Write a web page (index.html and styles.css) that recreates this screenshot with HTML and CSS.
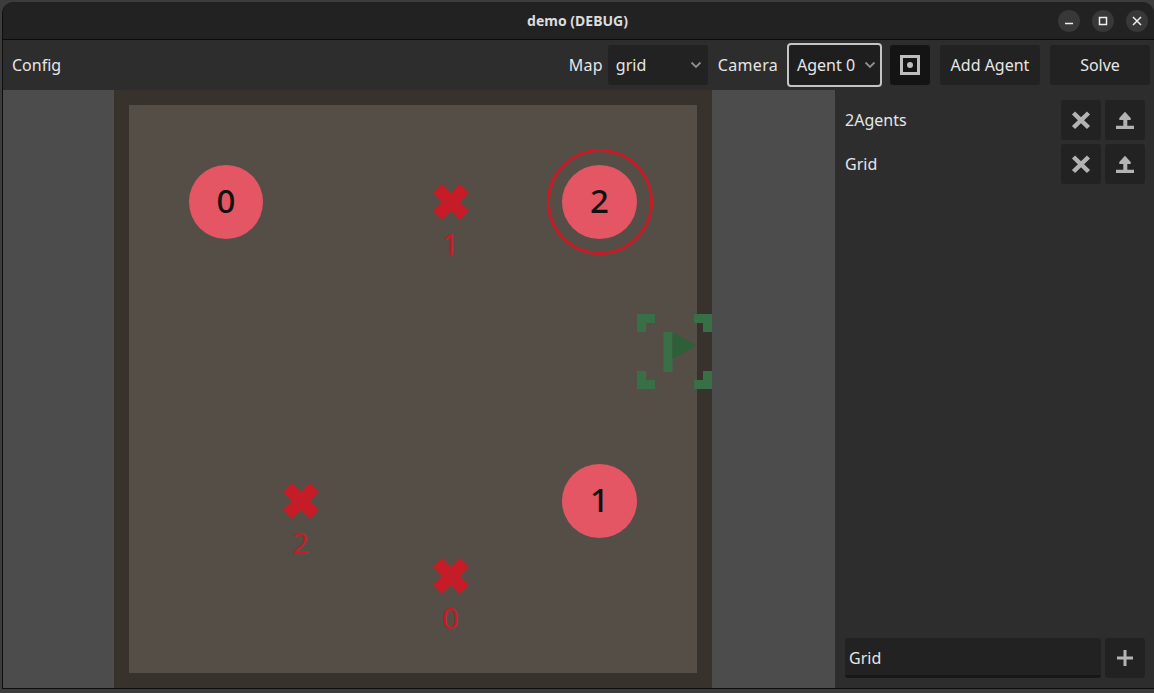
FILE: index.html
```html
<!DOCTYPE html>
<html lang="en">
<head>
<meta charset="utf-8">
<title>demo (DEBUG)</title>
<link rel="stylesheet" href="styles.css">
</head>
<body>
<div class="window">
  <header class="titlebar">
    <div class="title">demo (DEBUG)</div>
    <div class="controls">
      <div class="ctl"><svg width="22" height="22" viewBox="0 0 22 22"><path d="M7 13.500h8" stroke="#eeeeee" stroke-width="1.500" fill="none"/></svg></div>
      <div class="ctl"><svg width="22" height="22" viewBox="0 0 22 22"><rect x="7.500" y="7.500" width="7" height="7" stroke="#eeeeee" stroke-width="1.500" fill="none"/></svg></div>
      <div class="ctl"><svg width="22" height="22" viewBox="0 0 22 22"><path d="M7 7l8 8M15 7l-8 8" stroke="#eeeeee" stroke-width="1.500" fill="none"/></svg></div>
    </div>
  </header>
  <nav class="toolbar">
    <div class="tool-label config">Config</div>
    <div class="tool-spacer"></div>
    <div class="tool-label label-map">Map</div>
    <div class="select select-map"><span>grid</span><svg class="chev" width="12" height="8" viewBox="0 0 12 8"><path d="M1.500 1.500L6 6l4.500-4.500" stroke="#8e8e8e" stroke-width="1.800" fill="none"/></svg></div>
    <div class="tool-label label-camera">Camera</div>
    <div class="select select-agent"><span>Agent 0</span><svg class="chev" width="12" height="8" viewBox="0 0 12 8"><path d="M1.500 1.500L6 6l4.500-4.500" stroke="#8e8e8e" stroke-width="1.800" fill="none"/></svg></div>
    <div class="btn btn-square btn-pressed"><svg width="20" height="20" viewBox="0 0 20 20"><path fill-rule="evenodd" d="M0 0h20v20H0zM3 3v14h14V3z" fill="#bdbdbd"/><circle cx="10" cy="10" r="3" fill="#bdbdbd"/></svg></div>
    <div class="btn btn-wide">Add Agent</div>
    <div class="btn btn-wide">Solve</div>
  </nav>
  <main class="main">
    <section class="viewport">
      <div class="map-frame">
        <div class="map">
          <div class="agent agent-0">0</div>
          <div class="agent agent-1">1</div>
          <div class="agent agent-2">2</div>
          <div class="ring"></div>
          <div class="goal goal-1"><svg width="36" height="36" viewBox="0 0 36 36"><path d="M9 0L18 9L27 0L36 9L27 18L36 27L27 36L18 27L9 36L0 27L9 18L0 9Z" fill="#c61c27"/></svg><span>1</span></div>
          <div class="goal goal-2"><svg width="36" height="36" viewBox="0 0 36 36"><path d="M9 0L18 9L27 0L36 9L27 18L36 27L27 36L18 27L9 36L0 27L9 18L0 9Z" fill="#c61c27"/></svg><span>2</span></div>
          <div class="goal goal-0"><svg width="36" height="36" viewBox="0 0 36 36"><path d="M9 0L18 9L27 0L36 9L27 18L36 27L27 36L18 27L9 36L0 27L9 18L0 9Z" fill="#c61c27"/></svg><span>0</span></div>
        </div>
        <svg class="camera" width="75" height="75" viewBox="0 0 75 75">
          <path d="M0 0h18v9H9v9H0zM57 0h18v18h-9V9h-9zM0 57h9v9h9v9H0zM66 57h9v18H57v-9h9z" fill="#386f46"/>
          <rect x="26.500" y="18" width="9" height="40" fill="#386f46"/>
          <path d="M35.500 18L59 31.500L35.500 45z" fill="#2d5f38"/>
        </svg>
      </div>
    </section>
    <aside class="panel">
      <div class="rows">
        <div class="row"><div class="row-name">2Agents</div>
          <div class="btn btn-square"><svg width="20" height="20" viewBox="0 0 20 20"><path d="M2.500 3l15 14.500M17.500 3l-15 14.500" stroke="#b3b3b3" stroke-width="4.500" fill="none"/></svg></div>
          <div class="btn btn-square"><svg width="20" height="20" viewBox="0 0 20 20"><path d="M10 1.700L15.700 8v2h-3.400v5.700H19V19H1v-3.300h7.300V10H4.300V8z" fill="#b3b3b3"/></svg></div>
        </div>
        <div class="row"><div class="row-name">Grid</div>
          <div class="btn btn-square"><svg width="20" height="20" viewBox="0 0 20 20"><path d="M2.500 3l15 14.500M17.500 3l-15 14.500" stroke="#b3b3b3" stroke-width="4.500" fill="none"/></svg></div>
          <div class="btn btn-square"><svg width="20" height="20" viewBox="0 0 20 20"><path d="M10 1.700L15.700 8v2h-3.400v5.700H19V19H1v-3.300h7.300V10H4.300V8z" fill="#b3b3b3"/></svg></div>
        </div>
      </div>
      <div class="row">
        <div class="input">Grid</div>
        <div class="btn btn-square"><svg width="20" height="20" viewBox="0 0 20 20"><path d="M10 2v16M2 10h16" stroke="#b3b3b3" stroke-width="3" fill="none"/></svg></div>
      </div>
    </aside>
  </main>
</div>
</body>
</html>
```

FILE: styles.css
```css
* { box-sizing: border-box; }
html, body { margin: 0; height: 100%; }
body {
  background: #3c3c3c;
  overflow: hidden;
  font-family: "Noto Sans", "Open Sans", sans-serif;
  font-size: 16px;
  font-weight: 400;
  color: #e6e6e6;
}
.window {
  margin: 2px 0 0 2px;
  width: 1152px;
  height: 687px;
  display: flex;
  flex-direction: column;
  border-left: 1px solid #0e0e0e;
  border-bottom: 1px solid #0e0e0e;
  border-radius: 12px 12px 0 0;
  overflow: hidden;
  background: #222;
}
.titlebar {
  height: 37px;
  flex: none;
  background: #222222;
  position: relative;
  display: flex;
  align-items: center;
  justify-content: flex-end;
  padding-right: 6px;
}
.title {
  position: absolute;
  left: 0;
  right: 0;
  text-align: center;
  font-size: 14px;
  font-weight: 700;
  color: #dcdcdc;
  padding-right: 2px;
}
.controls { display: flex; gap: 12px; }
.ctl {
  width: 22px;
  height: 22px;
  border-radius: 50%;
  background: #383838;
}
.ctl svg { display: block; }
.toolbar {
  height: 51px;
  flex: none;
  border-top: 1px solid #0b0b0b;
  background: #2d2d2d;
  display: flex;
  align-items: center;
  padding: 0 4px 0 9px;
}
.tool-label { padding: 0 3px 1px 0; line-height: 22px; white-space: nowrap; }
.label-map, .label-camera { letter-spacing: 0.3px; }
.tool-spacer { flex: 1; }
.select {
  height: 40px;
  background: #222222;
  border-radius: 3px;
  display: flex;
  align-items: center;
  justify-content: space-between;
  padding: 0 5px 1px 8px;
}
.select-map { width: 100px; margin: 0 10px 0 2px; }
.select-map .chev { margin-right: 1px; }
.select-agent {
  width: 95px;
  height: 44px;
  margin: 0 8px 0 7px;
  background: #1e1e1e;
  border: 2px solid #c4c4c4;
  border-radius: 4px;
  padding: 0 4px 1px 8px;
}
.label-camera { padding-right: 2px; }
.btn {
  height: 40px;
  flex: none;
  background: #222222;
  border-radius: 3px;
  display: flex;
  align-items: center;
  justify-content: center;
  padding-bottom: 1px;
}
.btn-square { width: 40px; padding-bottom: 0; }
.btn-pressed { background: #141414; margin-right: 10px; }
.btn-wide { width: 100px; }
.btn-wide + .btn-wide { margin-left: 10px; }
.main { flex: 1; display: flex; min-height: 0; }
.viewport {
  width: 832px;
  flex: none;
  background: #4c4c4c;
  padding-left: 111px;
}
.map-frame {
  width: 598px;
  height: 598px;
  background: #37322c;
  padding: 15px;
  position: relative;
  overflow: hidden;
}
.map {
  width: 568px;
  height: 568px;
  background: #554e47;
  position: relative;
}
.agent {
  position: absolute;
  width: 75px;
  height: 74px;
  border-radius: 50%;
  background: #e45664;
  color: #111;
  font-size: 33px;
  font-weight: 500;
  line-height: 72px;
  text-align: center;
}
.agent-0 { left: 60px; top: 60px; width: 74px; }
.agent-1 { left: 433px; top: 359px; }
.agent-2 { left: 433px; top: 60px; }
.ring {
  position: absolute;
  left: 418px;
  top: 44px;
  width: 106px;
  height: 106px;
  border: 3px solid #c61c27;
  border-radius: 50%;
}
.goal {
  position: absolute;
  width: 36px;
  color: #c61c27;
  font-size: 29px;
  font-weight: 400;
  line-height: 36px;
  text-align: center;
}
.goal svg { display: block; }
.goal span { display: block; margin: 6px 1px 0 0; }
.goal-1 { left: 304px; top: 79px; }
.goal-2 { left: 154px; top: 378px; }
.goal-0 { left: 304px; top: 453px; }
.camera { position: absolute; left: 523px; top: 224px; }
.panel {
  flex: 1;
  background: #2d2d2d;
  padding: 10px 9px 10px 10px;
  display: flex;
  flex-direction: column;
  justify-content: space-between;
}
.rows { display: flex; flex-direction: column; gap: 4px; }
.row { display: flex; align-items: center; gap: 4px; }
.row-name { flex: 1; padding-bottom: 1px; }
.input {
  flex: 1;
  height: 40px;
  background: #222222;
  border-bottom: 3px solid #171717;
  border-radius: 3px;
  padding: 3px 4px 0;
  display: flex;
  align-items: center;
}
```
